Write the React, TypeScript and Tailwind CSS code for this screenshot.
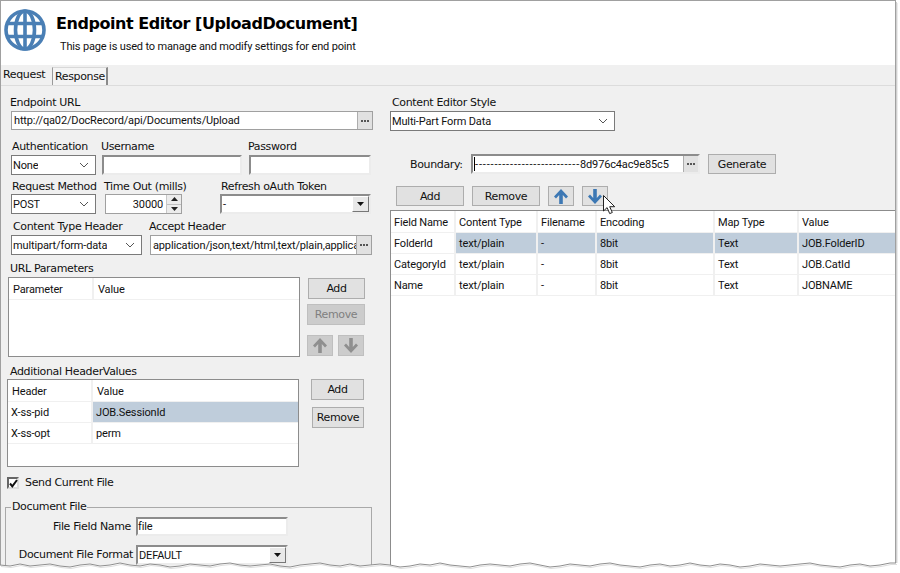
import React from "react";
import clsx from "clsx";

const btn = "flex items-center justify-center pt-[2px] bg-[#e1e1e1] border border-[#adadad] text-[#111]";
const btnOff = "flex items-center justify-center pt-[2px] bg-[#cccccc] border border-[#bfbfbf] text-[#808080]";
const icoBtn = "flex items-center justify-center border";
const sunken = "bg-white border-2 border-t-[#8c8c8c] border-l-[#8c8c8c] border-b-[#ececec] border-r-[#ececec]";
const ctl = "font-['Roboto',sans-serif] tracking-[-0.15px]";

const Chevron = () => (
  <svg width="10" height="6" viewBox="0 0 10 6" className="ml-auto mr-[6px] shrink-0">
    <path d="M1 1l4 4 4-4" fill="none" stroke="#555" strokeWidth="1" />
  </svg>
);

const Select = ({ value, className }: { value: string; className: string }) => (
  <div className={clsx("flex items-center h-[20px] bg-white border border-[#7a7a7a] pl-[1px]", ctl, className)}>
    <span className="truncate pt-[2px]">{value}</span>
    <Chevron />
  </div>
);

const Combo = ({ value, className }: { value: string; className: string }) => (
  <div className={clsx("flex items-center h-[20px]", sunken, ctl, className)}>
    <span className="pl-[1px] pt-[2px]">{value}</span>
    <div className="ml-auto flex items-center justify-center w-[17px] h-[16px] bg-[#e8e8e8] border border-t-white border-l-white border-r-[#777] border-b-[#777]">
      <svg width="7" height="4" viewBox="0 0 7 4">
        <path d="M0 0h7L3.5 4z" fill="#111" />
      </svg>
    </div>
  </div>
);

const Dots = () => (
  <div className="flex items-center justify-center gap-[1px] w-[15px] h-full bg-[#e1e1e1] border-l border-[#adadad] shrink-0">
    <span className="w-[2px] h-[2px] bg-[#555]" />
    <span className="w-[2px] h-[2px] bg-[#555]" />
    <span className="w-[2px] h-[2px] bg-[#555]" />
  </div>
);

const Arrow = ({ dir, color }: { dir: "up" | "down"; color: string }) => (
  <svg width="16" height="17" viewBox="0 0 16 17" className={dir === "down" ? "rotate-180" : ""}>
    <path d="M8 1L1 8.5 3 10.5 6.2 7V16H9.8V7L13 10.5 15 8.5z" fill={color} />
  </svg>
);

const Row = ({
  cells,
  widths,
  selectedFrom,
  height,
  pad,
  header,
}: {
  cells: string[];
  widths: number[];
  selectedFrom?: number;
  height: number;
  pad: number;
  header?: boolean;
}) => (
  <div className={clsx("flex border-b border-[#f0f0f0]", ctl)} style={{ height }}>
    {cells.map((c, i) => (
      <div
        key={i}
        className={clsx("flex items-center border-r-2 last:border-r-0 border-[#f0f0f0] shrink-0", {
          "bg-[#bfcddb]": selectedFrom !== undefined && i >= selectedFrom,
          "pt-[4px]": header,
          "pt-[2px]": !header,
        })}
        style={{ width: widths[i], paddingLeft: pad }}
      >
        {c}
      </div>
    ))}
  </div>
);

const tornTop = [
  565, 566, 564, 566, 565, 564, 566, 567, 565, 564, 566, 565, 563, 565, 566, 564, 565, 567, 566, 564, 565, 566, 564,
  563, 565, 566, 565, 564, 566, 567, 565, 564, 563, 565, 566, 564, 566, 565, 564, 565, 567, 566, 564, 565, 563, 565,
  566, 567, 565, 564, 565, 566, 564, 563, 565, 567, 566, 564, 565, 566, 564, 563, 565, 566, 567, 565, 564, 566, 565,
  563, 565, 566, 564, 565, 567, 566, 564, 565, 566, 565, 564, 563, 565, 566, 567, 565, 564, 566, 565, 563,
];

const tornPoints = tornTop.map((y, i) => `${i * 10},${y}`).join(" ") + " 896,563";

export default function App() {
  const rightWidths = [65, 82, 59, 118, 84, 100];
  return (
    <div className="relative w-[900px] h-[573px] overflow-hidden bg-white font-['DejaVu_Sans',sans-serif] text-[11px] tracking-[-0.35px] text-[#111]">
      <div className="w-[896px] h-[573px] border-t border-l border-r border-[#a0a0a0] bg-[#f0f0f0] flex flex-col">
        {/* header */}
        <div className="flex h-[64px] bg-white shrink-0">
          <svg width="44" height="44" viewBox="0 0 44 44" className="ml-[2px] mt-[7px] shrink-0">
            <g fill="none" stroke="#4a7fb5" strokeWidth="3.6">
              <circle cx="22" cy="22" r="19" />
              <ellipse cx="22" cy="22" rx="9.5" ry="19" />
              <path d="M22 3v38M5 15.5h34M5 28.5h34" />
            </g>
          </svg>
          <div className="ml-[9px]">
            <div className="mt-[12px] text-[16px] leading-[22px] font-bold tracking-[-0.45px] text-black">
              Endpoint Editor [UploadDocument]
            </div>
            <div className={clsx("mt-[5px] ml-[4px] leading-[14px] text-[11px]", ctl)}>
              This page is used to manage and modify settings for end point
            </div>
          </div>
        </div>

        {/* tabs */}
        <div className="flex h-[21px] shrink-0 items-end border-b border-[#dcdcdc]">
          <div className="w-[50px] h-[20px] pl-[2px] leading-[19px]">Request</div>
          <div className="ml-[1px] w-[56px] h-[18px] pl-[2px] leading-[18px] bg-[#f4f4f4] border-l border-r-2 border-t border-l-[#9a9a9a] border-r-[#8a8a8a] border-t-[#d8d8d8]">
            Response
          </div>
        </div>

        <div className="flex flex-1 min-h-0">
          {/* left column */}
          <div className="w-[389px] shrink-0 flex flex-col [&>*]:shrink-0">
            <div className="mt-[9px] h-[14px] leading-[16px] ml-[9px]">Endpoint URL</div>
            <div className={clsx("mt-[2px] ml-[10px] w-[362px] h-[19px] flex items-center bg-white border border-[#a0a0a0]", ctl)}>
              <span className="pl-[2px] pt-[2px]">http://qa02/DocRecord/api/Documents/Upload</span>
              <div className="ml-auto h-full">
                <Dots />
              </div>
            </div>

            <div className="mt-[9px] h-[14px] leading-[16px] flex">
              <span className="ml-[11px] w-[89px]">Authentication</span>
              <span className="w-[147px]">Username</span>
              <span>Password</span>
            </div>
            <div className="mt-[2px] flex">
              <Select value="None" className="ml-[10px] w-[85px]" />
              <div className={clsx("ml-[6px] w-[140px] h-[20px]", sunken)} />
              <div className={clsx("ml-[7px] w-[122px] h-[20px]", sunken)} />
            </div>

            <div className="mt-[4px] h-[14px] leading-[16px] flex">
              <span className="ml-[11px] w-[92px]">Request Method</span>
              <span className="w-[117px]">Time Out (mills)</span>
              <span>Refresh oAuth Token</span>
            </div>
            <div className="mt-[1px] flex">
              <Select value="POST" className="ml-[10px] w-[85px]" />
              <div className={clsx("ml-[9px] w-[77px] h-[20px] flex items-center bg-white border border-[#a0a0a0]", ctl)}>
                <span className="ml-auto mr-[3px] pt-[2px]">30000</span>
                <div className="w-[15px] h-full flex flex-col bg-[#ececec] border-l border-[#c8c8c8]">
                  <div className="flex-1 flex items-center justify-center border-b border-[#c0c0c0]">
                    <svg width="7" height="4" viewBox="0 0 7 4">
                      <path d="M3.5 0L7 4H0z" fill="#222" />
                    </svg>
                  </div>
                  <div className="flex-1 flex items-center justify-center">
                    <svg width="7" height="4" viewBox="0 0 7 4">
                      <path d="M0 0h7L3.5 4z" fill="#222" />
                    </svg>
                  </div>
                </div>
              </div>
              <Combo value="-" className="ml-[38px] w-[151px]" />
            </div>

            <div className="mt-[5px] h-[14px] leading-[16px] flex">
              <span className="ml-[12px] w-[136px]">Content Type Header</span>
              <span>Accept Header</span>
            </div>
            <div className="mt-[2px] flex">
              <Select value="multipart/form-data" className="ml-[10px] w-[131px]" />
              <div className={clsx("ml-[8px] w-[222px] h-[20px] flex items-center bg-white border border-[#a0a0a0]", ctl)}>
                <span className="pl-[2px] pt-[2px] w-[205px] overflow-hidden whitespace-nowrap">
                  application/json,text/html,text/plain,application/xml
                </span>
                <div className="ml-auto h-full">
                  <Dots />
                </div>
              </div>
            </div>

            <div className="mt-[6px] h-[14px] leading-[16px] ml-[9px]">URL Parameters</div>
            <div className="mt-[2px] flex h-[80px]">
              <div className="ml-[7px] w-[292px] h-full bg-white border border-[#8c8c8c]">
                <Row cells={["Parameter", "Value"]} widths={[85, 205]} height={22} pad={4} header />
              </div>
              <div className="ml-[7px] flex flex-col">
                <div className={clsx(btn, "ml-[1px] mt-[1px] w-[57px] h-[21px]")}>Add</div>
                <div className={clsx(btnOff, "mt-[5px] w-[58px] h-[21px]")}>Remove</div>
                <div className="mt-[10px] flex gap-[5px]">
                  <div className={clsx(icoBtn, "bg-[#cccccc] border-[#bfbfbf] w-[26px] h-[21px]")}>
                    <Arrow dir="up" color="#8f8f8f" />
                  </div>
                  <div className={clsx(icoBtn, "bg-[#cccccc] border-[#bfbfbf] w-[26px] h-[21px]")}>
                    <Arrow dir="down" color="#8f8f8f" />
                  </div>
                </div>
              </div>
            </div>

            <div className="mt-[7px] h-[14px] leading-[16px] ml-[9px]">Additional HeaderValues</div>
            <div className="mt-[1px] flex h-[88px]">
              <div className="ml-[6px] w-[292px] h-full bg-white border border-[#8c8c8c]">
                <Row cells={["Header", "Value"]} widths={[85, 205]} height={22} pad={4} header />
                <Row cells={["X-ss-pid", "JOB.SessionId"]} widths={[85, 205]} height={21} selectedFrom={1} pad={3} />
                <Row cells={["X-ss-opt", "perm"]} widths={[85, 205]} height={21} pad={3} />
              </div>
              <div className="ml-[12px] flex flex-col">
                <div className={clsx(btn, "w-[53px] h-[21px]")}>Add</div>
                <div className={clsx(btn, "ml-[1px] mt-[7px] w-[52px] h-[21px]")}>Remove</div>
              </div>
            </div>

            <div className="mt-[9px] flex items-center h-[14px]">
              <div className="ml-[6px] w-[12px] h-[12px] flex items-center justify-center bg-white border-2 border-t-[#666] border-l-[#666] border-b-[#ddd] border-r-[#ddd]">
                <svg width="9" height="9" viewBox="0 0 9 9" className="shrink-0">
                  <path d="M1 4.5l2.3 2.8L8 1" fill="none" stroke="#111" strokeWidth="2" />
                </svg>
              </div>
              <span className="ml-[6px] leading-[16px]">Send Current File</span>
            </div>

            <fieldset className="mt-[9px] ml-[4px] w-[367px] border border-[#a9a9a9] pb-[20px]">
              <legend className="ml-[5px] px-[1px] leading-[16px]">Document File</legend>
              <div className="mt-[2px] flex items-center">
                <span className="w-[125px] text-right leading-[16px]">File Field Name</span>
                <div className={clsx("ml-[5px] w-[152px] h-[19px] leading-[15px]", sunken, ctl)}>file</div>
              </div>
              <div className="mt-[9px] flex items-center">
                <span className="w-[127px] text-right leading-[18px]">Document File Format</span>
                <Combo value="DEFAULT" className="ml-[3px] w-[152px]" />
              </div>
            </fieldset>
          </div>

          {/* right column */}
          <div className="flex-1 min-w-0 flex flex-col [&>*]:shrink-0">
            <div className="mt-[9px] h-[14px] leading-[16px] ml-[2px]">Content Editor Style</div>
            <Select value="Multi-Part Form Data" className="mt-[2px] w-[225px]" />

            <div className="mt-[23px] flex items-center h-[20px]">
              <span className="ml-[20px] w-[61px] pt-[2px]">Boundary:</span>
              <div className={clsx("w-[229px] h-[20px] flex items-center", sunken, ctl, "border-r-[#8c8c8c] border-b-[#8c8c8c]")}>
                <span className="w-[1px] h-[14px] bg-black shrink-0 ml-[1px]" />
                <span className="flex-1 pt-[2px] overflow-hidden whitespace-nowrap">
                  <span className="tracking-[0.85px]">---------------------------</span>8d976c4ac9e85c5
                </span>
                <Dots />
              </div>
              <div className={clsx(btn, "ml-[8px] w-[68px] h-[20px]")}>Generate</div>
            </div>

            <div className="mt-[12px] flex h-[20px]">
              <div className={clsx(btn, "ml-[6px] w-[68px]")}>Add</div>
              <div className={clsx(btn, "ml-[8px] w-[68px]")}>Remove</div>
              <div className={clsx(icoBtn, "bg-[#e1e1e1] border-[#adadad] ml-[8px] w-[26px]")}>
                <Arrow dir="up" color="#3d78b4" />
              </div>
              <div className={clsx(icoBtn, "bg-[#e1e1e1] border-[#adadad] ml-[8px] w-[26px]")}>
                <Arrow dir="down" color="#3d78b4" />
              </div>
            </div>

            <div className="mt-[4px] flex-1 bg-white border border-[#8c8c8c] border-r-0 overflow-hidden">
              <Row
                cells={["Field Name", "Content Type", "Filename", "Encoding", "Map Type", "Value"]}
                widths={rightWidths}
                height={22}
                pad={3}
                header
              />
              <Row
                cells={["FolderId", "text/plain", "-", "8bit", "Text", "JOB.FolderID"]}
                widths={rightWidths}
                height={21}
                selectedFrom={1}
                pad={3}
              />
              <Row cells={["CategoryId", "text/plain", "-", "8bit", "Text", "JOB.CatId"]} widths={rightWidths} height={21} pad={3} />
              <Row cells={["Name", "text/plain", "-", "8bit", "Text", "JOBNAME"]} widths={rightWidths} height={21} pad={3} />
            </div>
          </div>
        </div>
      </div>

      {/* screenshot shadow, torn edge and mouse pointer sit over the window */}
      <svg width="900" height="573" viewBox="0 0 900 573" className="absolute left-0 top-0 pointer-events-none">
        <rect x="896" y="2" width="1" height="561" fill="#d0d0d0" />
        <rect x="897" y="3" width="1" height="560" fill="#ececec" />
        <polygon points={`-1,573 -1,565 ${tornPoints} 900,563 900,573`} fill="white" />
        <polyline points={tornPoints} fill="none" stroke="#dddddd" strokeWidth="1" transform="translate(1 1.5)" />
        <polyline points={tornPoints} fill="none" stroke="#8f8f8f" strokeWidth="1" />
        <path
          d="M603.5 195.5v15.5l3.6-3.4 2.6 6 2.6-1.1-2.6-5.8h5z"
          fill="white"
          stroke="#222"
          strokeWidth="1"
        />
      </svg>
    </div>
  );
}
